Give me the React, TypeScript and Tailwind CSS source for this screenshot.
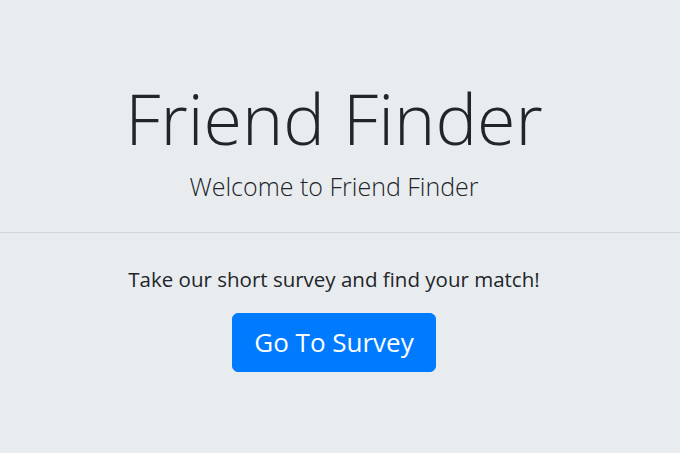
import React from "react"

const App: React.FC = () => {
    return (
        <div className="min-h-screen bg-[#e9ecef] text-[#212529] font-['Open_Sans',sans-serif]">
            <div className="pt-[73px] pr-[12px] text-center">
                <h1 className="text-[70px] leading-[90px] font-light">Friend Finder</h1>
                <p className="mt-[3px] text-[25px] leading-[40px] font-light">Welcome to Friend Finder</p>
            </div>
            <hr className="mt-[26px] border-0 border-t border-[#d3d5d8]" />
            <div className="pt-[30px] pr-[12px] text-center">
                <p className="text-[20.5px] leading-[32px]">Take our short survey and find your match!</p>
                <a
                    href="#"
                    className="inline-block mt-[18px] px-[21px] py-[10px] rounded-[6px] bg-[#007bff] text-white text-[26px] leading-[37px] border border-[#007bff]"
                >
                    Go To Survey
                </a>
            </div>
        </div>
    )
}

export default App
